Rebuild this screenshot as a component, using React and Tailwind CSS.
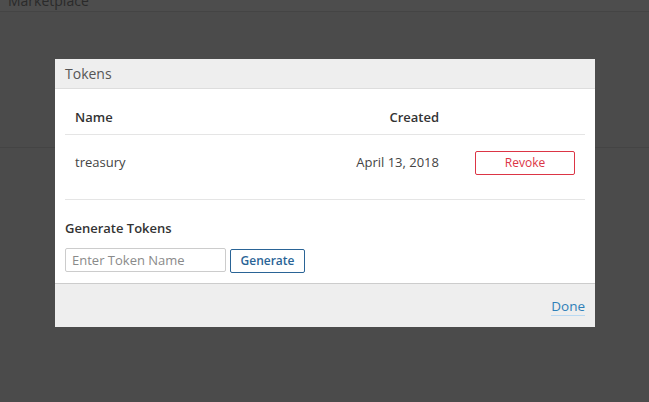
import React from 'react';

const tokens = [{ name: 'treasury', created: 'April 13, 2018' }];

const App = () => {
  return (
    <div className="relative w-[649px] h-[402px] overflow-hidden bg-[#4b4b4b] font-['Open_Sans','Liberation_Sans',sans-serif]">
      {/* page behind the overlay */}
      <div className="h-[12px] overflow-hidden bg-[#4d4d4d] border-b border-[#444444]">
        <div className="-mt-[8px] pl-[8px] text-[14px] leading-[18px] text-[#2a2a2a]">Marketplace</div>
      </div>
      <div className="h-[135px]"></div>
      <div className="h-px bg-[#444444]"></div>

      {/* modal */}
      <div className="absolute left-[55px] top-[59px] w-[540px] h-[268px] bg-white flex flex-col">
        <div className="h-[30px] bg-[#eeeeee] border-b border-[#dddddd] px-[10px] flex items-center text-[14px] text-[#555555]">
          Tokens
        </div>

        <div className="px-[10px] flex-1">
          <div className="flex items-center h-[46px] pt-[13px] border-b border-[#e5e5e5] text-[13px] font-semibold text-[#333333]">
            <div className="flex-1 pl-[10px]">Name</div>
            <div className="w-[140px] text-right">Created</div>
            <div className="w-[146px]"></div>
          </div>
          {tokens.map((t) => (
            <div key={t.name} className="flex items-center h-[65px] border-b border-[#e5e5e5] text-[13px] text-[#444444] pb-[9px]">
              <div className="flex-1 pl-[10px]">{t.name}</div>
              <div className="w-[140px] text-right">{t.created}</div>
              <div className="w-[146px] flex justify-end pr-[10px]">
                <button className="w-[100px] h-[24px] border border-[#dc3545] rounded-[2px] text-[12px] text-[#dc3545] bg-white">
                  Revoke
                </button>
              </div>
            </div>
          ))}

          <div className="pt-[19px] text-[13px] font-semibold text-[#333333] leading-[18px]">Generate Tokens</div>
          <div className="flex items-start gap-[4px] mt-[11px]">
            <input
              placeholder="Enter Token Name"
              className="w-[161px] h-[24px] border border-[#cccccc] rounded-[2px] px-[6px] text-[13px] text-[#333333] placeholder:text-[#8a8a8a] outline-none"
            />
            <button className="mt-px w-[75px] h-[24px] border border-[#2a6496] rounded-[2px] text-[12px] font-semibold text-[#2a6496] bg-white">
              Generate
            </button>
          </div>
        </div>

        <div className="h-[44px] bg-[#eeeeee] border-t border-[#cccccc] flex items-center justify-end px-[10px] pt-[2px]">
          <span className="text-[13.5px] leading-[18px] text-[#2e7fb8] border-b border-[#b9d9f2]">Done</span>
        </div>
      </div>
    </div>
  );
};

export default App;
